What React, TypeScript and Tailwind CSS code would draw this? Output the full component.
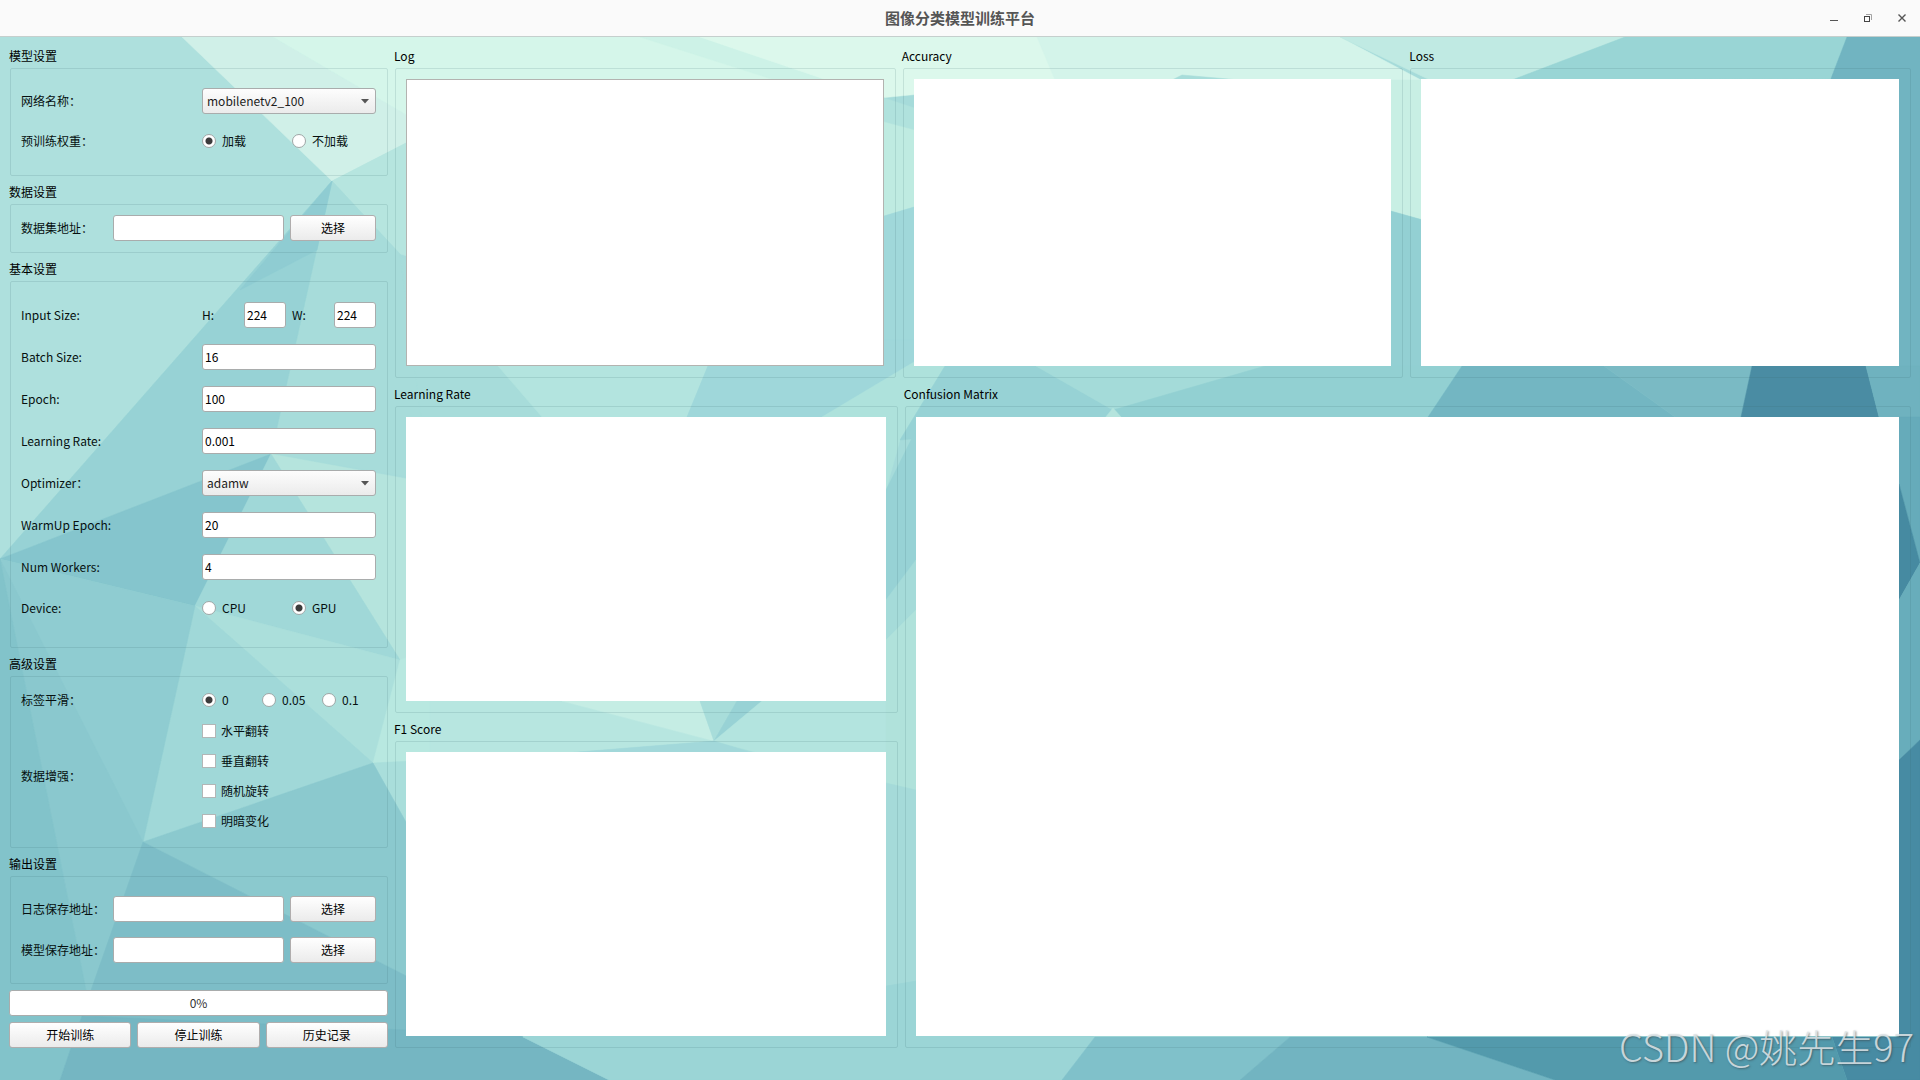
import React, { useId, useState } from 'react';

const FIELD =
  'h-[26px] min-w-0 rounded-[3px] border border-[#a9acac] bg-white px-[2px] pb-[2px] text-xs text-black outline-none focus:border-[#5a9fb0]';
const BUTTON =
  'h-[26px] rounded-[3px] border border-[#b0adad] bg-linear-to-b from-white to-[#ebebeb] text-xs text-black hover:to-[#f6f6f6]';
const LABEL = 'text-xs text-[#061010]';

// Facets of the low-poly wallpaper, painted back to front
const FACETS: [string, string][] = [
  // left side
  ['0,37 182,37 332,181 0,559', '#aee0dd'],
  ['182,37 273,37 470,152 406,143 332,181', '#d0f0e8'],
  ['273,37 700,37 860,110 470,152', '#d5f6ea'],
  ['332,181 406,143 560,300 400,254', '#b6e5df'],
  ['332,181 400,254 430,480 271,454', '#a7dcda'],
  ['332,181 271,454 0,559', '#97d2d5'],
  ['332,181 317,250 240,290', '#8fccd2'],
  ['271,454 0,559 195,606', '#85c5cd'],
  ['271,454 430,483 430,720 400,660', '#b5e4dd'],
  ['271,454 400,660 195,606', '#a0d8d8'],
  ['195,606 400,660 373,763', '#abdfdb'],
  ['400,660 430,650 430,762 373,763', '#b8e8e0'],
  ['195,606 373,763 143,842', '#a0d8d8'],
  ['373,763 430,760 430,870', '#a9dedb'],
  ['373,763 430,865 430,988 143,842', '#8bc9ce'],
  ['0,559 195,606 143,842 88,1000', '#8fccd1'],
  ['0,559 143,842 88,1000', '#8ac8ce'],
  ['0,559 88,1000 60,1080 0,1080', '#82c3ca'],
  ['143,842 430,988 430,1040 82,1016', '#7dbdc7'],
  ['82,1016 430,1031 523,1037 609,1080 60,1080', '#75b6c2'],
  ['406,976 523,1037 406,1037', '#75b6c2'],
  // top band
  ['640,37 710,37 900,105 900,120', '#cdf2e7'],
  ['700,37 1040,37 1060,80 880,98', '#dcf8ec'],
  ['1037,37 1340,37 1421,80 1055,80', '#d4f4ea'],
  ['1172,80 1182,75 1240,80', '#a8ddda'],
  ['1340,37 1625,37 1512,80 1430,80', '#c0eae3'],
  ['1625,37 1847,37 1830,79 1512,80', '#99d5d5'],
  ['1847,37 1920,37 1920,366 1720,366', '#71b4c1'],
  // gutters between the top charts
  ['884,98 914,108 914,130 884,122', '#b0e2dd'],
  ['884,122 914,130 914,207 884,216', '#bfebe1'],
  ['884,216 914,207 914,366 884,366', '#a0d8da'],
  ['1380,80 1430,80 1430,222 1380,208', '#c8efe4'],
  ['1380,208 1430,222 1430,366 1380,366', '#93d0d3'],
  // band under the top charts
  ['400,254 500,366 542,417 421,417', '#a7dcda'],
  ['480,340 718,340 687,417 542,417 498,366', '#b3e4df'],
  ['708,366 730,340 914,340 914,362 822,417 687,417', '#9fd7da'],
  ['914,362 945,366 900,440 886,490 886,417 822,417', '#aee2dc'],
  ['945,366 1036,366 1113,410 1120,420 900,440', '#97d2d5'],
  ['1036,366 1265,366 1113,410', '#a4dbd9'],
  ['1265,366 1462,366 1428,417 1120,417 1113,410', '#92d0d2'],
  ['1113,408 1122,418 1105,418', '#b5e4dd'],
  ['1462,366 1604,366 1675,417 1428,417', '#73b6c2'],
  ['1604,366 1752,366 1741,417 1675,417', '#7abac4'],
  ['1752,366 1866,366 1879,417 1741,417', '#4a8ca3'],
  ['1866,366 1920,366 1920,480 1879,417', '#6fb2bf'],
  // band above the F1 chart
  ['430,700 562,701 714,741 553,754 430,754', '#b7e6e0'],
  ['562,701 700,701 714,741', '#c5ede4'],
  ['700,701 737,701 714,741', '#a8ddda'],
  ['737,701 762,701 714,741', '#98d2d5'],
  ['762,701 916,701 916,790 755,752 714,741', '#b3e4df'],
  ['714,741 755,754 553,754', '#a2d8da'],
  // gutter beside the confusion matrix
  ['886,490 916,430 916,560 886,600', '#97d2d5'],
  ['886,600 916,560 916,610 886,640', '#a5dbd9'],
  ['886,640 916,610 916,790 886,783', '#b0e2db'],
  ['886,783 916,790 916,981 886,986', '#a5dad9'],
  // right edge
  ['1899,417 1920,417 1920,563 1899,484', '#66abba'],
  ['1899,484 1920,563 1899,600', '#468aa1'],
  ['1899,600 1920,563 1920,740 1899,760', '#68adbb'],
  ['1899,760 1920,740 1920,1080 1847,1080 1832,1037 1899,1037', '#478ba3'],
  // bottom band
  ['523,1037 886,986 916,981 1095,1037 1062,1080 609,1080', '#9bd5d6'],
  ['1095,1037 1290,1037 1240,1080 1062,1080', '#80c1ca'],
  ['1290,1037 1427,1037 1555,1080 1240,1080', '#72b4c1'],
  ['1427,1037 1832,1037 1847,1080 1555,1080', '#539aac'],
];

function Wallpaper() {
  return (
    <svg
      className="absolute inset-0 h-full w-full"
      viewBox="0 37 1920 1043"
      preserveAspectRatio="none"
      aria-hidden="true"
    >
      <rect y="37" width="1920" height="1043" fill="#a6dbda" />
      {FACETS.map(([points, fill]) => (
        <polygon key={points} points={points} fill={fill} stroke={fill} strokeWidth="0.5" />
      ))}
    </svg>
  );
}

function TitleBar() {
  return (
    <header className="grid h-[37px] grid-cols-[1fr_auto_1fr] items-center border-b border-[#c5cfcd] bg-[#fafafa] text-[#555]">
      <h1 className="col-start-2 text-[15px] font-bold">图像分类模型训练平台</h1>
      <div className="flex justify-end gap-[14px] pr-2">
        <button aria-label="最小化" className="flex size-5 items-center justify-center">
          <svg width="10" height="10" viewBox="0 0 10 10">
            <path d="M1 7.5h8" stroke="currentColor" />
          </svg>
        </button>
        <button aria-label="还原" className="flex size-5 items-center justify-center">
          <svg width="10" height="10" viewBox="0 0 10 10" fill="none">
            <path d="M3 1.5h5.500v5.500" stroke="#a3a3a3" />
            <rect x="1.500" y="3.500" width="5" height="5" stroke="#444" />
          </svg>
        </button>
        <button aria-label="关闭" className="flex size-5 items-center justify-center">
          <svg width="10" height="10" viewBox="0 0 10 10">
            <path d="M1.500 1.500l7 7M8.500 1.500l-7 7" stroke="currentColor" strokeWidth="1.400" />
          </svg>
        </button>
      </div>
    </header>
  );
}

interface GroupProps {
  title: string;
  bodyClass: string;
  className?: string;
  children: React.ReactNode;
}

function Group({ title, bodyClass, className = '', children }: GroupProps) {
  return (
    <section className={`flex min-w-0 flex-col ${className}`}>
      <h2 className="h-[22px] text-xs leading-5 text-black">{title}</h2>
      <div className={`ml-px rounded-[2px] border border-[#37646e]/15 pr-[11px] pl-[10px] ${bodyClass}`}>
        {children}
      </div>
    </section>
  );
}

function ChartPanel({ title, outlined = false, className }: { title: string; outlined?: boolean; className?: string }) {
  return (
    <Group title={title} className={className} bodyClass="flex flex-1 pt-[10px] pb-[11px]">
      <div className={`flex-1 bg-white ${outlined ? 'border border-[#b3b3b0]' : ''}`} />
    </Group>
  );
}

function TextRow({ label, value }: { label: string; value: string }) {
  const id = useId();
  return (
    <div className="flex h-[26px] items-center justify-between">
      <label htmlFor={id} className={LABEL}>{label}</label>
      <input id={id} type="text" defaultValue={value} className={`${FIELD} w-[174px]`} />
    </div>
  );
}

function SelectRow({ label, options }: { label: string; options: string[] }) {
  const id = useId();
  return (
    <div className="flex h-[26px] items-center justify-between">
      <label htmlFor={id} className={LABEL}>{label}</label>
      <div className="relative flex w-[174px]">
        <select
          id={id}
          className="h-[26px] w-full appearance-none rounded-[3px] border border-[#a9acac] bg-linear-to-b from-[#fdfdfd] to-[#ebebeb] px-1 pb-px text-xs text-[#1c1c1c] outline-none"
        >
          {options.map((option) => (
            <option key={option}>{option}</option>
          ))}
        </select>
        <svg className="pointer-events-none absolute top-[11px] right-[7px]" width="8" height="5" viewBox="0 0 8 5">
          <path d="M0 0h8L4 4.500z" fill="#555" />
        </svg>
      </div>
    </div>
  );
}

function PathRow({ label }: { label: string }) {
  const id = useId();
  return (
    <div className="flex h-[26px] items-center">
      <label htmlFor={id} className={`${LABEL} w-[92px] whitespace-nowrap`}>{label}</label>
      <input id={id} type="text" className={`${FIELD} mr-[6px] flex-1`} />
      <button className={`${BUTTON} w-[86px]`}>选择</button>
    </div>
  );
}

interface RadioRowProps {
  label: string;
  options: string[];
  initial: string;
  optionsClass: string;
}

function RadioRow({ label, options, initial, optionsClass }: RadioRowProps) {
  const name = useId();
  const [value, setValue] = useState(initial);
  return (
    <div role="radiogroup" aria-label={label} className="flex h-6 items-center justify-between">
      <span className={LABEL}>{label}</span>
      <div className={`grid w-[174px] ${optionsClass}`}>
        {options.map((option) => (
          <label key={option} className={`${LABEL} flex items-center gap-[6px] whitespace-nowrap`}>
            <input
              type="radio"
              name={name}
              checked={value === option}
              onChange={() => setValue(option)}
              className="size-[14px] shrink-0 appearance-none rounded-full border border-[#9fa6a6] bg-white checked:bg-[radial-gradient(circle,#3c3c3c_3px,#fff_4px)]"
            />
            {option}
          </label>
        ))}
      </div>
    </div>
  );
}

function SizeInput({ label, value }: { label: string; value: string }) {
  const id = useId();
  return (
    <div className="flex w-[84px] items-center justify-between">
      <label htmlFor={id} className={LABEL}>{label}</label>
      <input id={id} type="text" defaultValue={value} className={`${FIELD} w-[42px]`} />
    </div>
  );
}

const AUGMENTATIONS = ['水平翻转', '垂直翻转', '随机旋转', '明暗变化'];

function Settings() {
  return (
    <div className="flex w-[379px] shrink-0 flex-col gap-[6px]">
      <Group title="模型设置" bodyClass="flex h-[108px] flex-col gap-[15px] pt-[19px]">
        <SelectRow label="网络名称：" options={['mobilenetv2_100', 'resnet50', 'efficientnet_b0']} />
        <RadioRow label="预训练权重：" options={['加载', '不加载']} initial="加载" optionsClass="grid-cols-[84px_84px] gap-[6px]" />
      </Group>

      <Group title="数据设置" bodyClass="h-[49px] pt-[10px]">
        <PathRow label="数据集地址：" />
      </Group>

      <Group title="基本设置" bodyClass="flex h-[367px] flex-col gap-4 pt-5">
        <div className="flex h-[26px] items-center justify-between">
          <span className={LABEL}>Input Size:</span>
          <div className="flex gap-[6px]">
            <SizeInput label="H:" value="224" />
            <SizeInput label="W:" value="224" />
          </div>
        </div>
        <TextRow label="Batch Size:" value="16" />
        <TextRow label="Epoch:" value="100" />
        <TextRow label="Learning Rate:" value="0.001" />
        <SelectRow label="Optimizer：" options={['adamw', 'adam', 'sgd']} />
        <TextRow label="WarmUp Epoch:" value="20" />
        <TextRow label="Num Workers:" value="4" />
        <RadioRow label="Device:" options={['CPU', 'GPU']} initial="GPU" optionsClass="grid-cols-[84px_84px] gap-[6px]" />
      </Group>

      <Group title="高级设置" bodyClass="flex h-[172px] flex-col gap-1 pt-[11px]">
        <RadioRow label="标签平滑：" options={['0', '0.05', '0.1']} initial="0" optionsClass="grid-cols-[54px_54px_54px] gap-[6px]" />
        <div role="group" aria-label="数据增强" className="flex items-center justify-between">
          <span className={LABEL}>数据增强：</span>
          <div className="w-[174px]">
            {AUGMENTATIONS.map((name) => (
              <label key={name} className={`${LABEL} flex h-[30px] items-center gap-[5px]`}>
                <input
                  type="checkbox"
                  className="size-[14px] appearance-none border border-[#b3b6b6] bg-white checked:bg-[#3c3c3c]"
                />
                {name}
              </label>
            ))}
          </div>
        </div>
      </Group>

      <Group title="输出设置" bodyClass="flex h-[108px] flex-col gap-[15px] pt-[19px]">
        <PathRow label="日志保存地址：" />
        <PathRow label="模型保存地址：" />
      </Group>

      <div
        role="progressbar"
        aria-label="训练进度"
        aria-valuenow={0}
        aria-valuemin={0}
        aria-valuemax={100}
        className="flex h-[26px] items-center justify-center rounded-[3px] border border-[#a9acac] bg-white text-xs text-[#333]"
      >
        0%
      </div>

      <div className="grid grid-cols-3 gap-[6px]">
        <button className={BUTTON}>开始训练</button>
        <button className={BUTTON}>停止训练</button>
        <button className={BUTTON}>历史记录</button>
      </div>
    </div>
  );
}

function Charts() {
  return (
    <div className="grid min-w-0 flex-1 grid-rows-[332fr_664fr] gap-[6px]">
      <div className="grid grid-cols-3 gap-[6px]">
        <ChartPanel title="Log" outlined />
        <ChartPanel title="Accuracy" />
        <ChartPanel title="Loss" />
      </div>
      <div className="grid grid-cols-[1fr_2fr] grid-rows-2 gap-[6px]">
        <ChartPanel title="Learning Rate" />
        <ChartPanel title="Confusion Matrix" className="row-span-2" />
        <ChartPanel title="F1 Score" />
      </div>
    </div>
  );
}

export default function App() {
  return (
    <div className="flex min-h-screen flex-col font-['Noto_Sans_CJK_SC','Noto_Sans',sans-serif]">
      <TitleBar />
      <main className="relative flex-1">
        <Wallpaper />
        <div className="relative flex gap-[6px] px-[9px] pt-[9px] pb-8">
          <Settings />
          <Charts />
        </div>
        <p className="pointer-events-none absolute right-[6px] bottom-2 text-[38px] leading-[52px] font-light whitespace-nowrap text-[#dfe6e9]/85 [text-shadow:1px_1px_2px_rgba(60,70,75,0.6)]">
          CSDN @姚先生97
        </p>
      </main>
    </div>
  );
}
